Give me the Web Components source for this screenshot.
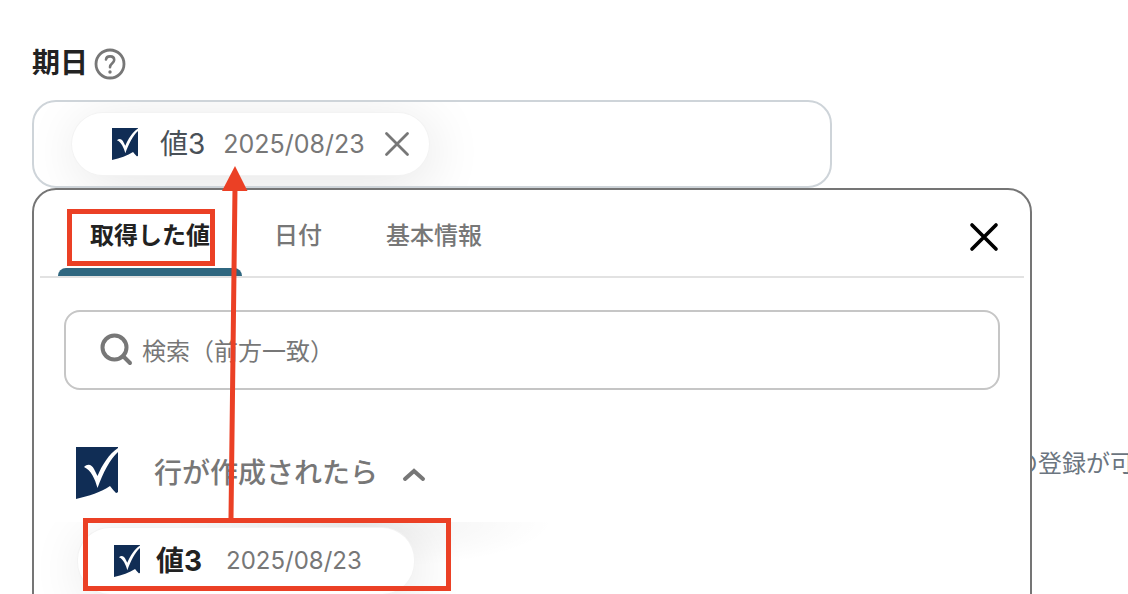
<!DOCTYPE html>
<html lang="ja">
<head>
<meta charset="utf-8">
<title>期日</title>
<style>
body{margin:0;background:#fff;color:#222;font-family:Inter,"Noto Sans CJK JP",sans-serif;font-size:24px;line-height:32px}
</style>
</head>
<body>
<due-page></due-page>
<script>
const define=(name,html)=>{
  const t=document.createElement('template');
  t.innerHTML=html;
  customElements.define(name,class extends HTMLElement{
    constructor(){
      super();
      this.attachShadow({mode:'open'}).append(t.content.cloneNode(true));
    }
  });
};

define('app-logo',`
<style>:host{display:block;width:26px;height:32px;flex:none}:host([large]){width:42px;height:52px}svg{display:block;width:100%;height:100%}</style>
<svg viewBox="0 0 42 52" preserveAspectRatio="none" aria-hidden="true">
<path fill="#102d55" d="M0 0H42V45Q41 46 40 46Q37 43 34 39C25 45 13 49 0 52Z"/>
<path fill="#fff" d="M8 20C12 16 16 18 18 22L21.500 29C26 18 33 7 42 1V5C34 12 27 26 21.500 41C19 32 15 23 8 20Z"/>
</svg>`);

define('value-chip',`
<style>
:host{display:flex;align-items:center;box-sizing:border-box;height:62px;border-radius:32px;background:#fff;color:#495057;box-shadow:0 0 0 1px #f3f3f3,4px 8px 56px rgba(0,0,0,.11);padding:0 18px 0 40px}
.name{margin-left:22px;font-size:28px;white-space:nowrap}
.date{margin-left:18px;font-size:25px;color:#777;white-space:nowrap}
:host([option]){height:66px;padding:0 52px 0 36px;color:#222}
:host([option]) .name{font-weight:700;margin-left:16px}
:host([option]) .date{margin-left:24px;font-size:24px}
</style>
<app-logo></app-logo><span class="name"><slot></slot></span><span class="date"><slot name="date"></slot></span><slot name="action"></slot>`);

define('icon-close',`
<style>
:host{display:block;flex:none}
button{display:block;padding:0;border:0;background:none;color:inherit;width:28px;height:28px}
svg{display:block;width:100%;height:100%;fill:none;stroke:currentColor;stroke-width:2.8;stroke-linecap:round}
:host([large]) button{width:32px;height:32px}
:host([large]) svg{stroke-width:3.2}
</style>
<button type="button" aria-label="閉じる"><svg viewBox="0 0 28 28"><path d="M3.500 3.500L24.500 24.500M24.500 3.500L3.500 24.500"/></svg></button>`);

define('field-label',`
<style>
:host{display:flex;align-items:center;gap:6px;height:40px}
span{font-size:28px;line-height:40px;font-weight:700}
button{padding:2px 0 0;border:0;background:none;width:32px;height:34px}
svg{display:block;fill:none;stroke:#777;stroke-linecap:round;stroke-linejoin:round}
</style>
<span><slot></slot></span>
<button type="button" aria-label="ヘルプ"><svg width="32" height="32" viewBox="0 0 32 32"><circle cx="16" cy="16" r="14" stroke-width="2.800"/><path stroke-width="2.600" d="M12 11.500C12.400 7.200 20.200 7.200 20.200 12C20.200 15.300 16 15.200 16 19.200"/><circle cx="16" cy="24" r="1.700" fill="#777" stroke="none"/></svg></button>`);

define('value-field',`
<style>
:host{display:flex;align-items:center;box-sizing:border-box;max-width:800px;height:88px;border:2px solid #ced4d9;border-radius:24px;padding:0 38px;overflow:hidden}
</style><slot></slot>`);

define('tab-bar',`
<style>
:host{display:flex;align-items:stretch;height:86px;margin:0 6px;border-bottom:2px solid #e2e2e2;padding:0 24px 0 18px}
button{font:inherit;font-weight:500;color:#777;border:0;background:none;padding:22px 32px 0;height:86px;box-sizing:border-box;display:flex;flex-direction:column;justify-content:space-between;white-space:nowrap;line-height:48px}
button[aria-selected=true]{font-weight:700;color:#222}
button::after{content:"";display:block;height:8px;margin:0 -32px;align-self:stretch}
button[aria-selected=true]::after{background:#2f6780;border-radius:8px 8px 0 0}
.close{margin-left:auto;align-self:center;color:#000;padding-top:8px}
</style>
<button role="tab" aria-selected="true" type="button">取得した値</button>
<button role="tab" aria-selected="false" type="button">日付</button>
<button role="tab" aria-selected="false" type="button">基本情報</button>
<icon-close class="close" large></icon-close>`);

define('search-box',`
<style>
:host{display:flex;align-items:center;box-sizing:border-box;height:80px;margin:32px 30px 0;border:2px solid #c6c6c6;border-radius:16px;padding:0 32px;gap:8px}
svg{flex:none;fill:none;stroke:#777;stroke-width:4;stroke-linecap:round}
input{flex:1;min-width:0;border:0;outline:0;background:none;font:inherit;color:#222;padding:2px 0 0;height:40px}
input::placeholder{color:#777;opacity:1}
</style>
<svg width="36" height="36" viewBox="0 0 36 36" aria-hidden="true"><circle cx="16.500" cy="15.500" r="12"/><path d="M25 24L32 31"/></svg>
<input type="text" aria-label="検索" placeholder="検索（前方一致）">`);

define('value-group',`
<style>
:host{display:block;margin-top:56px}
button{display:flex;align-items:center;border:0;background:none;padding:0 42px;font:inherit;font-size:28px;line-height:40px;font-weight:500;color:#777;height:54px}
.t{margin-left:36px}
svg{margin-left:24px;margin-top:4px;fill:none;stroke:#777;stroke-width:4;stroke-linecap:round}
.list{display:flex;flex-direction:column;align-items:flex-start;overflow:hidden;margin-top:22px;padding:6px 44px 40px;background:radial-gradient(ellipse 190px 46px at 330px 0,rgba(0,0,0,.06),transparent)}
</style>
<button type="button" aria-expanded="true"><app-logo large></app-logo><span class="t"><slot name="title"></slot></span>
<svg width="24" height="24" viewBox="0 0 24 24" aria-hidden="true"><path d="M3 16L12 8L21 16"/></svg></button>
<div class="list"><slot></slot></div>`);

define('value-panel',`
<style>
:host{display:block;position:absolute;top:100%;left:0;right:0;max-width:1000px;box-sizing:border-box;background:#fff;border:2px solid #757575;border-radius:24px}
</style><slot></slot>`);

define('mark-layer',`
<style>:host{position:absolute;top:0;left:0;pointer-events:none}svg{display:block}</style>
<svg width="460" height="594" fill="none" stroke="#eb4025" stroke-width="5" aria-hidden="true">
<path d="M69.500 211.500H212.500V263.500H69.500ZM85.500 520.500H448.500V588.500H85.500ZM231 518L235 188"/>
<path stroke="none" fill="#eb4025" d="M235 166L247.500 191H222Z"/></svg>`);

define('due-page',`
<style>
:host{display:block;position:relative;box-sizing:border-box;height:100vh;overflow:hidden;padding:43px 32px 0}
.anchor{position:relative;margin-top:17px}
.chip-close{margin-left:18px;color:#777}
.note{margin:260px -32px 0 0;text-align:right;color:#6b7580;white-space:nowrap}
.note span{margin-right:-6px}
</style>
<field-label>期日</field-label>
<div class="anchor">
<value-field><value-chip>値3<span slot="date">2025/08/23</span><icon-close class="chip-close" slot="action"></icon-close></value-chip></value-field>
<value-panel>
<tab-bar></tab-bar>
<search-box></search-box>
<value-group><span slot="title">行が作成されたら</span><value-chip option>値3<span slot="date">2025/08/23</span></value-chip></value-group>
</value-panel>
</div>
<div class="note"><span>の登録が可</span></div>
<mark-layer></mark-layer>`);
</script>
</body>
</html>
